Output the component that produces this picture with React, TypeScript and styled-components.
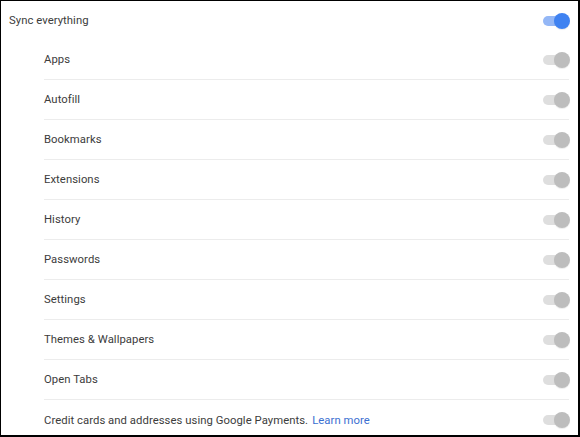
import React, { useState } from 'react';
import styled, { createGlobalStyle } from 'styled-components';

const GlobalStyle = createGlobalStyle`
  html, body {
    margin: 0;
    padding: 0;
    background: #fff;
  }
  * {
    box-sizing: border-box;
  }
`;

const Frame = styled.div`
  width: 580px;
  height: 437px;
  border-style: solid;
  border-color: #000;
  border-width: 1px 2px 2px 1px;
  overflow: hidden;
  font-family: Roboto, 'Liberation Sans', sans-serif;
  font-size: 11.3px;
  color: #3c3c3c;
  background: #fff;
`;

const TopRow = styled.div`
  display: flex;
  align-items: center;
  justify-content: space-between;
  height: 39px;
  padding: 0 9px 0 8px;
`;

const List = styled.div`
  display: flex;
  flex-direction: column;
  padding-left: 43px;
  padding-right: 9px;
`;

const Row = styled.div<{ $last?: boolean }>`
  display: flex;
  align-items: center;
  justify-content: space-between;
  height: 40px;
  border-bottom: ${(p) => (p.$last ? 'none' : '1px solid #ececec')};
`;

const Label = styled.span`
  letter-spacing: 0.05px;
`;

const Link = styled.a`
  color: #3b6fd1;
  text-decoration: none;
  margin-left: 4px;
`;

const Track = styled.button<{ $on: boolean }>`
  position: relative;
  width: 22px;
  height: 10px;
  margin-right: 4px;
  padding: 0;
  border: none;
  border-radius: 5px;
  background: ${(p) => (p.$on ? '#94b7f6' : '#dedede')};
  cursor: pointer;
`;

const Thumb = styled.span<{ $on: boolean }>`
  position: absolute;
  top: -3px;
  right: -5px;
  width: 16px;
  height: 16px;
  border-radius: 50%;
  background: ${(p) => (p.$on ? '#3f82f1' : '#bdbdbd')};
  box-shadow: 0 1px 1px rgba(0, 0, 0, 0.08);
`;

function Toggle({ on, onClick }: { on: boolean; onClick?: () => void }) {
  return (
    <Track $on={on} onClick={onClick} aria-pressed={on}>
      <Thumb $on={on} />
    </Track>
  );
}

const items = [
  'Apps',
  'Autofill',
  'Bookmarks',
  'Extensions',
  'History',
  'Passwords',
  'Settings',
  'Themes & Wallpapers',
  'Open Tabs',
];

function App() {
  const [syncAll, setSyncAll] = useState(true);

  return (
    <>
      <GlobalStyle />
      <Frame>
        <TopRow>
          <Label>Sync everything</Label>
          <Toggle on={syncAll} onClick={() => setSyncAll(!syncAll)} />
        </TopRow>
        <List>
          {items.map((name) => (
            <Row key={name}>
              <Label>{name}</Label>
              <Toggle on={false} />
            </Row>
          ))}
          <Row $last>
            <Label>
              Credit cards and addresses using Google Payments.
              <Link href="#">Learn more</Link>
            </Label>
            <Toggle on={false} />
          </Row>
        </List>
      </Frame>
    </>
  );
}

export default App;
